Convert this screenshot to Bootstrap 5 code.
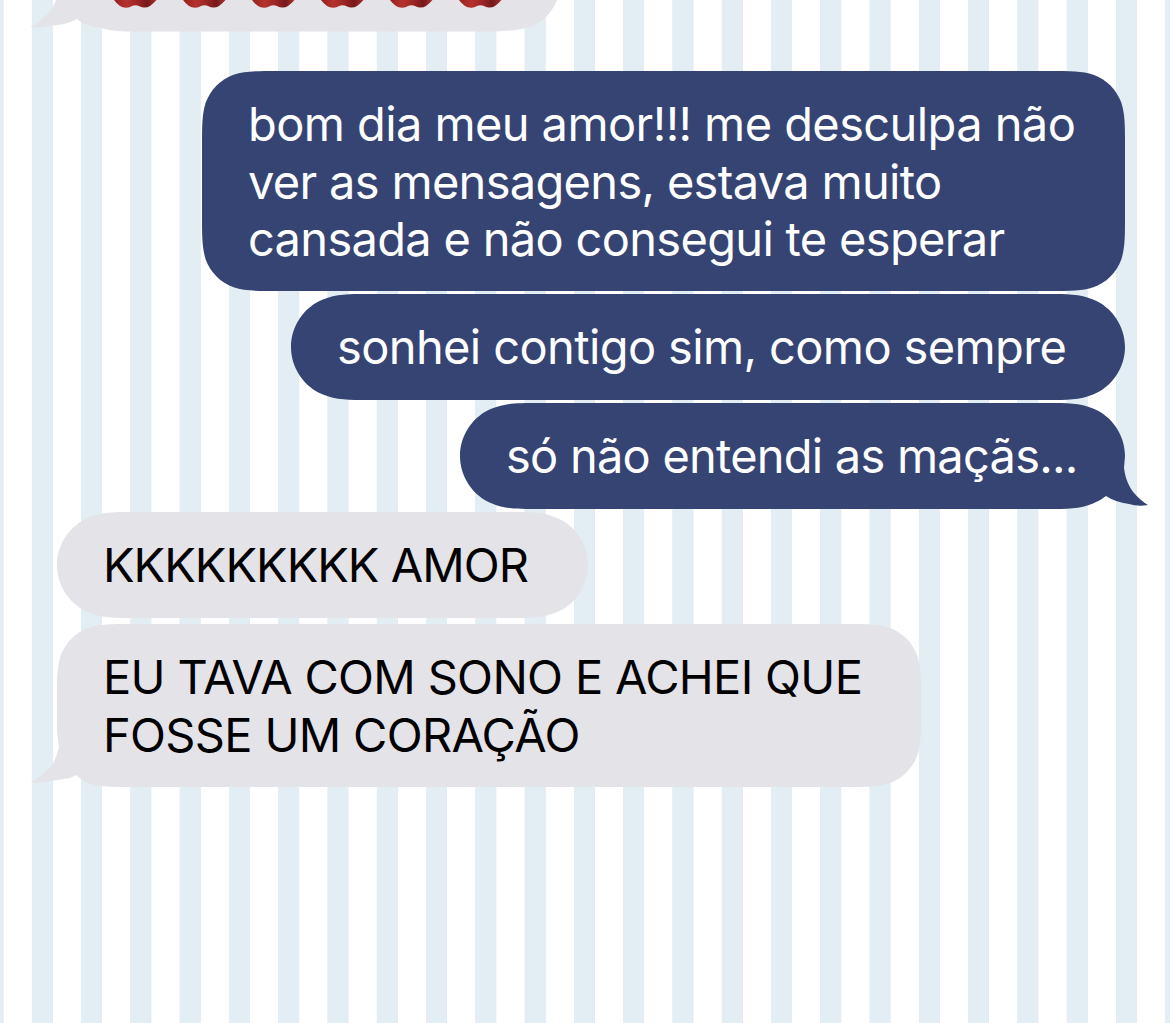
<!DOCTYPE html>
<html lang="pt-BR"><head><meta charset="utf-8"><title>Mensagens</title>
<link href="https://cdn.jsdelivr.net/npm/bootstrap@5.3.0/dist/css/bootstrap.min.css" rel="stylesheet">
<style>
html,body{height:1023px;overflow:hidden}
body{background:repeating-linear-gradient(90deg,#e2edf4 0,#e3edf4 19.6px,#e6eaf3 20.6px,#fff 21.2px,#fff 48.7px,#e6edf4 49.28px) -17.3px 0/1500px 100%;font-family:Inter,"Liberation Sans",sans-serif;font-size:47px;line-height:57.6px}
.chat{height:1023px;padding:0 45px 0 57px}
.bubble{position:relative;z-index:0;white-space:nowrap;padding:24px 46px}
.bubble>.shape{position:absolute;left:0;top:0;z-index:-1;overflow:visible}
.sent{color:#fff;fill:#364473}
.recv{color:#000;fill:#e4e3e8}
.b0{width:506px;height:31px;margin-bottom:40px;padding:0 56px}
.b1{width:923px;height:220px;margin-bottom:3px;letter-spacing:-.69px}
.b1 span:first-child,.b1 .first{letter-spacing:-.59px}
.b2{width:834px;height:106px;margin-bottom:3px;letter-spacing:-.62px}
.b3{width:665px;height:106px;margin-bottom:3px;letter-spacing:-.77px}
.b4{width:531px;height:106px;margin-bottom:6px;letter-spacing:-.97px}
.b5{width:864px;height:163px;letter-spacing:-.68px}
.apples{gap:25px}
</style>
<script src="https://cdn.jsdelivr.net/npm/bootstrap@5.3.0/dist/js/bootstrap.bundle.min.js"></script>
</head><body>
<svg width="0" height="0" class="position-absolute"><defs>
<linearGradient id="red" x1="0" x2="1"><stop offset="0" stop-color="#96211f"/><stop offset=".3" stop-color="#b5322d"/><stop offset=".55" stop-color="#9c2524"/><stop offset=".78" stop-color="#761819"/><stop offset="1" stop-color="#a93230"/></linearGradient>
<symbol id="apple" viewBox="0 0 44 8"><path fill="url(#red)" d="M1 0H43.500Q40.500 3.500 37 6Q34.500 7.800 30.500 7.600Q28 7.300 26 6Q22.500 4.300 19 6Q16.500 7.500 13.500 7.700Q9.500 7.800 7 6Q3.500 3.500 1 0Z"/></symbol>
</defs></svg>
<main class="chat d-flex flex-column">
<div class="bubble recv b0 align-self-start"><svg class="shape" width="506" height="31"><path d="M-1-1H500.500Q496 10 489 17Q484 22 476 25.500Q464 31.500 430 31.500H76C60 31.500 51 30 44 28C31 26 23 22 20 19Q10 25-9 26Q-26 29-26 26Q-22 26-14 18Q-5 12-1 0Z"/></svg>
<div class="apples d-flex"><svg width="44" height="8"><use href="#apple"/></svg><svg width="44" height="8"><use href="#apple"/></svg><svg width="44" height="8"><use href="#apple"/></svg><svg width="44" height="8"><use href="#apple"/></svg><svg width="44" height="8"><use href="#apple"/></svg><svg width="44" height="8"><use href="#apple"/></svg></div></div>
<div class="bubble sent b1 align-self-end"><svg class="shape" width="923" height="220"><path d="M76 0H847C869 0 880 0 891.400 3.700C904.400 8.500 914.500 18.600 919.300 31.600C923 43.400 923 54.400 923 76V144C923 165.600 923 176.600 919.300 188.400C914.500 201.400 904.400 211.500 891.400 216.300C880 220 869 220 847 220H76C54 220 43 220 31.600 216.300C18.600 211.500 8.500 201.400 3.700 188.400C0 176.600 0 165.600 0 144V76C0 54.400 0 43.400 3.700 31.600C8.500 18.600 18.600 8.500 31.600 3.700C43 0 54 0 76 0Z"/></svg><span class="first">bom dia meu amor!!! me desculpa não</span><br><span>ver as mensagens, estava muito</span><br><span>cansada e não consegui te esperar</span></div>
<div class="bubble sent b2 align-self-end"><svg class="shape" width="834" height="106"><path d="M78 0H756C776 0 789 0 802 5.500C821 13 834 32 834 53S821 93 802 100.500C789 106 776 106 756 106H78C58 106 45 106 32 100.500C13 93 0 74 0 53S13 13 32 5.500C45 0 58 0 78 0Z"/></svg><span>sonhei contigo sim, como sempre</span></div>
<div class="bubble sent b3 align-self-end"><svg class="shape" width="665" height="106"><path d="M78 0H587C607 0 620 0 633 5.500C652 13 665 32 665 53L664 65C666 79 671 91 688 102Q678 104 669 101Q655 99 646 93Q640 98 633 100.500C620 106 607 106 587 106H78C58 106 45 106 32 100.500C13 93 0 74 0 53S13 13 32 5.500C45 0 58 0 78 0Z"/></svg><span>só não entendi as maçãs...</span></div>
<div class="bubble recv b4 align-self-start"><svg class="shape" width="531" height="106"><path d="M78 0H453C473 0 486 0 499 5.500C518 13 531 32 531 53S518 93 499 100.500C486 106 473 106 453 106H78C58 106 45 106 32 100.500C13 93 0 74 0 53S13 13 32 5.500C45 0 58 0 78 0Z"/></svg><span>KKKKKKKKK AMOR</span></div>
<div class="bubble recv b5 align-self-start"><svg class="shape" width="864" height="163"><path d="M76 0H788C810 0 821 0 832.400 3.700C845.400 8.500 855.500 18.600 860.300 31.600C864 43.400 864 54.400 864 76V87C864 108.600 864 119.600 860.300 131.400C855.500 144.400 845.400 154.500 832.400 159.300C821 163 810 163 788 163H76C54 163 43 163 31.600 159.300Q24 156 19 151Q14 155-1 156Q-18 160-26 158Q-14 152-4 140Q0 132 2 123C0 111 0 105 0 90V76C0 54.400 0 43.400 3.700 31.600C8.500 18.600 18.600 8.500 31.600 3.700C43 0 54 0 76 0Z"/></svg><span>EU TAVA COM SONO E ACHEI QUE</span><br><span>FOSSE UM CORAÇÃO</span></div>
</main>
</body></html>
